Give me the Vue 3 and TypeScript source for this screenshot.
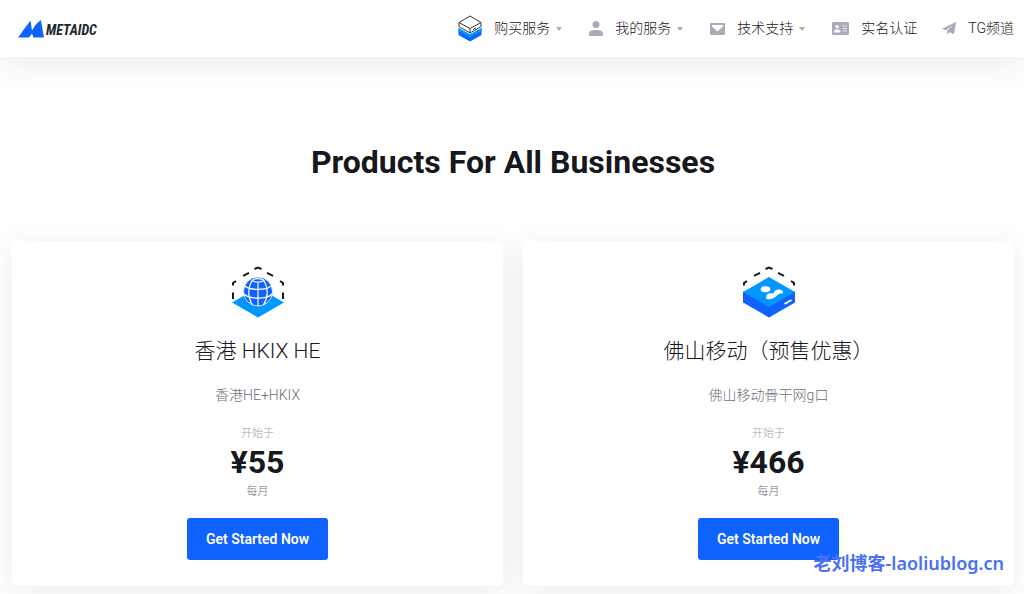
<script setup lang="ts">
interface NavItem {
  label: string
  icon: 'stack' | 'user' | 'mail' | 'idcard' | 'plane'
  menu: boolean
}

interface Product {
  name: string
  summary: string
  price: string
  icon: 'globe' | 'server'
}

const navItems: NavItem[] = [
  { label: '购买服务', icon: 'stack', menu: true },
  { label: '我的服务', icon: 'user', menu: true },
  { label: '技术支持', icon: 'mail', menu: true },
  { label: '实名认证', icon: 'idcard', menu: false },
  { label: 'TG频道', icon: 'plane', menu: false },
]

const products: Product[] = [
  { name: '香港 HKIX HE', summary: '香港HE+HKIX', price: '¥55', icon: 'globe' },
  { name: '佛山移动（预售优惠）', summary: '佛山移动骨干网g口', price: '¥466', icon: 'server' },
]
</script>

<template>
  <div class="page">
    <header class="header">
      <a class="brand" href="#" aria-label="METAIDC">
        <svg class="brand-mark" viewBox="0 0 26 18" aria-hidden="true">
          <path d="M0 17.500C2 15 5 10.500 12.500.5L14 10.500C16 7 18.500 3 22.800 0L26 17.500H15.500L14 13.500 11 17.500z" fill="#0f62fe" />
        </svg>
        <span class="brand-name">METAIDC</span>
      </a>
      <nav class="nav">
        <a v-for="item in navItems" :key="item.label" class="nav-item" href="#">
          <svg v-if="item.icon === 'stack'" class="icon-stack" viewBox="0 0 24 27" aria-hidden="true">
            <path d="M.5 13 12 19.500 23.500 13v7L12 26.500.5 20z" fill="#0f62fe" />
            <path d="M.5 13 12 19.500 23.500 13v3L12 22.500.5 16z" fill="#0098ff" />
            <path d="M1 7.500 12 1l11 6.500v4L12 18 1 11.500z" fill="#fff" stroke="#33373c" />
            <path d="M1 7.500 12 13.500l11-6M12 13.500V18" fill="none" stroke="#33373c" />
            <path d="m15 14.500 3-1.700" fill="none" stroke="#33373c" />
          </svg>
          <svg v-else-if="item.icon === 'user'" class="icon-user" viewBox="0 0 14 15" aria-hidden="true">
            <circle cx="7" cy="3.500" r="3.500" />
            <path d="M0 15v-2.500C0 10 3 9 7 9s7 1 7 3.500V15z" />
          </svg>
          <svg v-else-if="item.icon === 'mail'" class="icon-mail" viewBox="0 0 15 12" aria-hidden="true">
            <path fill-rule="evenodd" d="M1 0h13a1 1 0 0 1 1 1v10a1 1 0 0 1-1 1H1a1 1 0 0 1-1-1V1a1 1 0 0 1 1-1zM2 2v1.500L7.500 8.500 13 3.500V2z" />
          </svg>
          <svg v-else-if="item.icon === 'idcard'" class="icon-idcard" viewBox="0 0 17 13" aria-hidden="true">
            <rect width="17" height="13" rx="1.500" />
            <circle cx="5.200" cy="4.700" r="1.800" fill="#fff" />
            <path d="M2 10.500V9.500C2 8 3.500 7.500 5.200 7.500S8.400 8 8.400 9.500v1z" fill="#fff" />
            <path d="M10.500 4H15M10.500 6.500H15M10.500 9H15" stroke="#fff" stroke-opacity=".7" stroke-width="1" />
          </svg>
          <svg v-else class="icon-plane" viewBox="0 0 14 13" aria-hidden="true">
            <path d="M14 0 0 6.800 3.800 8.200 12 2.500 5.200 9v3.800L7.400 10 11.800 12z" />
            <path d="M14 0 5.200 9l6.600 3z" />
          </svg>
          <span class="nav-label">{{ item.label }}</span>
          <svg v-if="item.menu" class="caret" viewBox="0 0 6 4" aria-hidden="true">
            <path d="M0 0h6L3 4z" />
          </svg>
        </a>
      </nav>
    </header>

    <main class="main">
      <h1 class="title">Products For All Businesses</h1>
      <div class="cards">
        <article v-for="product in products" :key="product.name" class="card">
          <svg v-if="product.icon === 'globe'" class="product-icon" viewBox="0 0 52 52" aria-hidden="true">
            <path class="dashes" d="M22.500 3 26 1.500 29.500 3M11 9.800l6-3M41 9.800l-6-3M1 19.500V17l3-2M51 19.500V17l-3-2M1 26.500V33M51 26.500V33" />
            <path d="M0 36.500 26 21.500l26 15-26 15z" fill="#0098ff" />
            <circle cx="26" cy="25.500" r="14.500" fill="#0f62fe" stroke="#fff" stroke-width=".8" />
            <g fill="none" stroke="#fff" stroke-width="1.200">
              <path d="M26 16v24M20 14.500c2.500 2 9.500 2 12 0M13 20c5 4.500 21 4.500 26 0M12 28c5 5.500 23 5.500 28 0" />
              <path d="M20 14.500c-4.500 8-4.500 16 .5 24.500M32 14.500c4.500 8 4.500 16-.5 24.500" />
              <path d="M20 14.500c2-2.500 10-2.500 12 0" />
            </g>
          </svg>
          <svg v-else class="product-icon" viewBox="0 0 52 52" aria-hidden="true">
            <path class="dashes" d="M22.500 3 26 1.500 29.500 3M11 9.800l6-3M41 9.800l-6-3M1 19.500V17l3-2M51 19.500V17l-3-2" />
            <path d="M0 25.500v11l26 15 26-15v-11z" fill="#0f62fe" />
            <path d="M26 11 0 26l26 15 26-15z" fill="#0098ff" />
            <ellipse cx="22.500" cy="23.200" rx="4.800" ry="3" fill="#fff" />
            <path d="M23.500 33c-1-3 0-5.500 3.500-5.800 1.500 0 2.500.2 3.500 0 1-1.500 1-3.600 5-3.800 3.500 0 5 2 4.500 4-3-.2-4.500.6-6.500 2.600-2.500 2.200-5 3.700-10 3z" fill="#fff" />
            <path d="m41.500 38 7-4" stroke="#fff" stroke-width="2" />
          </svg>
          <h2 class="name">{{ product.name }}</h2>
          <p class="summary">{{ product.summary }}</p>
          <p class="note from">开始于</p>
          <p class="price">{{ product.price }}</p>
          <p class="note cycle">每月</p>
          <button class="cta" type="button">Get Started Now</button>
        </article>
      </div>
    </main>
    <div class="watermark">老刘博客-laoliublog.cn</div>
  </div>
</template>

<style>
body {
  margin: 0;
  background: #fff;
}
</style>

<style scoped>
.page {
  position: relative;
  overflow: hidden;
  color: #16181b;
  font-family: Roboto, "Noto Sans CJK SC", sans-serif;
}

.header {
  position: relative;
  display: flex;
  align-items: center;
  justify-content: space-between;
  height: 57px;
  padding: 0 10px 0 18px;
  background: #fff;
  box-shadow: 0 0 40px rgba(0, 0, 0, 0.11);
}

.brand {
  display: flex;
  align-items: flex-end;
  gap: 2px;
  color: #23272d;
  text-decoration: none;
}

.brand-mark {
  width: 26px;
  height: 18px;
}

.brand-name {
  font: italic 700 14px/16px "Liberation Sans Narrow", "Roboto Condensed", Roboto, sans-serif;
}

.nav {
  display: flex;
  align-items: center;
  gap: 27px;
}

.nav-item {
  display: flex;
  align-items: center;
  color: #16181b;
  font-size: 14px;
  line-height: 20px;
  text-decoration: none;
  fill: #a9acb8;
}

.nav-label {
  margin-left: 12px;
  padding-bottom: 2px;
  font-weight: 300;
}

.nav-item:last-child {
  margin-left: -2px;
}

.icon-stack {
  width: 24px;
  height: 27px;
}

.icon-user {
  width: 14px;
  height: 15px;
}

.icon-mail {
  width: 15px;
  height: 12px;
}

.icon-idcard {
  width: 17px;
  height: 13px;
}

.icon-plane {
  width: 14px;
  height: 13px;
}

.caret {
  width: 6px;
  height: 4px;
  margin-left: 6px;
}

.main {
  padding: 81px 10px 8px 12px;
}

.title {
  margin: 0;
  font-size: 32px;
  line-height: 48px;
  font-weight: 700;
  text-align: center;
}

.cards {
  display: grid;
  grid-template-columns: 1fr 1fr;
  gap: 20px;
  margin-top: 55px;
}

.card {
  display: flex;
  flex-direction: column;
  align-items: center;
  padding: 25px 20px 26px;
  border-radius: 6px;
  background: #fff;
  box-shadow: 0 5px 30px rgba(0, 0, 0, 0.08);
  text-align: center;
}

.product-icon {
  width: 52px;
  height: 52px;
}

.dashes {
  fill: none;
  stroke: #16181b;
  stroke-width: 2;
}

.name {
  margin: 18px 0 0;
  font-size: 21px;
  line-height: 30px;
  font-weight: 300;
}

.summary {
  margin: 19px 0 0;
  color: #6d6f7b;
  font-size: 14px;
  line-height: 20px;
  font-weight: 300;
}

.note {
  margin: 0;
  font-size: 11px;
  line-height: 16px;
  font-weight: 300;
}

.from {
  margin-top: 21px;
  color: #a0a3b0;
}

.price {
  margin: 0 0 2px;
  font-size: 32px;
  line-height: 40px;
  font-weight: 700;
}

.cycle {
  color: #6d6f7b;
}

.cta {
  margin-top: 18px;
  padding: 0 19px;
  border: 0;
  border-radius: 3px;
  background: #0f62fe;
  color: #fff;
  font: 600 14px/42px Roboto, sans-serif;
}

.watermark {
  position: absolute;
  right: 20px;
  top: 551px;
  color: #4a70f5;
  font: 600 18px/24px "Noto Sans", "Noto Sans CJK SC", sans-serif;
}
</style>
